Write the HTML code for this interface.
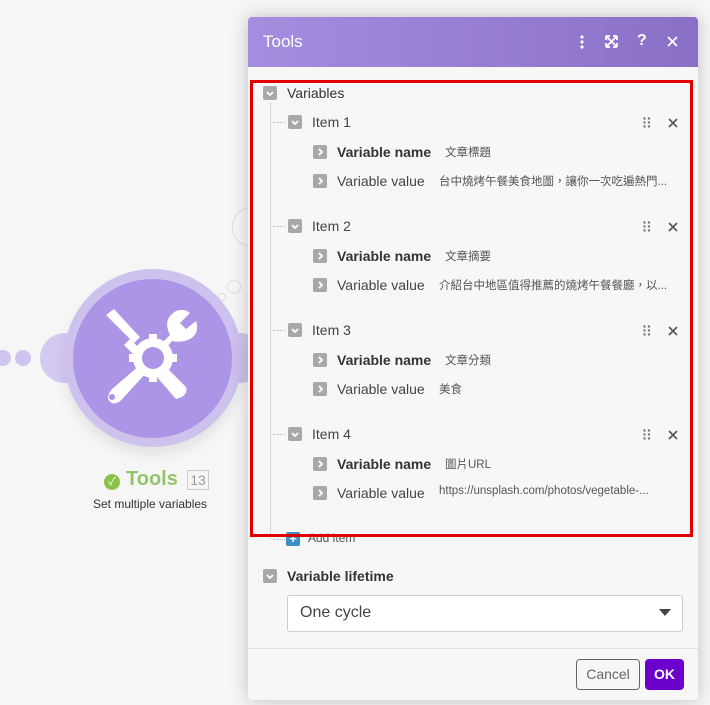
<!DOCTYPE html>
<html><head><meta charset="utf-8"><style>
*{margin:0;padding:0;box-sizing:border-box}
body{width:710px;height:705px;overflow:hidden;background:#f6f6f6;font-family:"Liberation Sans","Noto Sans CJK TC",sans-serif;position:relative;color:#333}
.a{position:absolute}
.panel{left:248px;top:17px;width:450px;height:683px;background:#f7f7f7;border-radius:4px;box-shadow:0 0 18px rgba(0,0,0,.22);overflow:hidden}
.hdr{left:0;top:0;width:450px;height:50px;background:linear-gradient(90deg,#a48ee0,#8a6fc6);color:#fff;font-size:17px;padding:15px 0 0 15px}
.cb{width:14px;height:14px;background:#a8a8a8;border-radius:2px}
.cb svg{display:block}
.t{font-size:14px;white-space:nowrap}
.v{font-size:11.5px;color:#555;white-space:nowrap}
</style></head><body>
<div class="a" style="left:-5px;top:350px;width:16px;height:16px;border-radius:50%;background:#cfc4ee"></div>
<div class="a" style="left:15px;top:350px;width:16px;height:16px;border-radius:50%;background:#cfc4ee"></div>
<div class="a" style="left:40px;top:333px;width:50px;height:50px;border-radius:50%;background:#d4c9f0"></div>
<div class="a" style="left:215px;top:333px;width:50px;height:50px;border-radius:50%;background:#d4c9f0"></div>
<div class="a" style="left:232px;top:207px;width:40px;height:40px;border-radius:50%;border:1px solid #ddd;background:#f7f7f7"></div>
<div class="a" style="left:227px;top:280px;width:14px;height:14px;border-radius:50%;border:1px solid #ddd"></div>
<div class="a" style="left:218px;top:293px;width:8px;height:8px;border-radius:50%;border:1px solid #ddd"></div>
<div class="a" style="left:64px;top:269px;width:178px;height:178px;border-radius:50%;background:#cdc1ee;box-shadow:0 8px 12px rgba(0,0,0,.08)"></div>
<div class="a" style="left:73px;top:279px;width:159px;height:159px;border-radius:50%;background:#ac95e6"></div>
<svg class="a" style="left:100px;top:305px" width="105" height="105" viewBox="0 0 105 105" fill="#fff">
<path d="M6 10 L14 4 L36 28 L40 32 L34 38 L30 34 Z"/>
<path d="M30 34 L44 48 L38 54 L24 40Z"/>
<path d="M58 54 L86 82 Q88 88 82 92 L76 94 L50 64 Z"/>
<path d="M62 38 L70 30 Q62 14 76 6 Q84 3 90 8 L80 18 L86 24 L96 16 Q100 28 90 34 Q82 38 72 36 L64 46Z"/>
<path d="M40 60 L12 84 Q4 94 12 98 Q18 100 24 92 L48 66Z"/><circle cx="12" cy="92" r="3" fill="#ac95e6"/>
<circle cx="53" cy="53" r="20"/><circle cx="53" cy="53" r="11" fill="#ac95e6"/>
<g><rect x="49" y="29" width="8" height="6"/><rect x="49" y="71" width="8" height="6"/><rect x="29" y="49" width="6" height="8"/><rect x="71" y="49" width="6" height="8"/></g>
</svg>
<div class="a" style="left:104px;top:474px;width:16px;height:16px;border-radius:50%;background:#8bc34a;color:#fff;font-size:11px;text-align:center;line-height:16px">✓</div>
<div class="a" style="left:126px;top:468px;font-size:20px;font-weight:bold;color:#94c46a">Tools</div>
<div class="a" style="left:187px;top:470px;width:22px;height:20px;border:1px solid #ccc;color:#999;font-size:14px;text-align:center;line-height:18px">13</div>
<div class="a" style="left:93px;top:497px;font-size:12px;color:#333">Set multiple variables</div>

<div class="a panel">
<div class="a hdr">Tools</div>
<svg class="a" style="left:331px;top:18px" width="6" height="14" fill="#fff"><circle cx="3" cy="2" r="1.6"/><circle cx="3" cy="7" r="1.6"/><circle cx="3" cy="12" r="1.6"/></svg>
<svg class="a" style="left:357px;top:18px" width="13" height="13" stroke="#fff" stroke-width="1.8" fill="none"><path d="M1 1l11 11M12 1L1 12M1 1h4M1 1v4M12 1h-4M12 1v4M1 12h4M1 12v-4M12 12h-4M12 12v-4"/></svg>
<div class="a" style="left:389px;top:15px;color:#fff;font-size:16px;font-weight:bold">?</div>
<svg class="a" style="left:419px;top:19px" width="11" height="11" stroke="#fff" stroke-width="1.8"><path d="M1 1l9 9M10 1l-9 9"/></svg>

<div class="a" style="left:22px;top:86px;height:436px;border-left:1px dotted #bbb"></div>
<div class="a cb" style="left:15px;top:69px"><svg width="14" height="14"><path d="M4 6l3 3 3-3" stroke="#fff" stroke-width="1.8" fill="none"/></svg></div>
<div class="a t" style="left:39px;top:68px">Variables</div>
</div>
<div id="items"></div>
<script>
var d=[["文章標題","台中燒烤午餐美食地圖，讓你一次吃遍熱門..."],["文章摘要","介紹台中地區值得推薦的燒烤午餐餐廳，以..."],["文章分類","美食"],["圖片URL","https://unsplash.com/photos/vegetable-..."]];
var h="";
for(var i=0;i<4;i++){var y=122+i*104;
h+='<div class="a" style="left:273px;top:'+(y)+'px;width:12px;border-top:1px dotted #bbb"></div>';
h+='<div class="a cb" style="left:288px;top:'+(y-7)+'px"><svg width="14" height="14"><path d="M4 6l3 3 3-3" stroke="#fff" stroke-width="1.8" fill="none"/></svg></div>';
h+='<div class="a t" style="left:312px;top:'+(y-8)+'px;color:#444">Item '+(i+1)+'</div>';
h+='<svg class="a" style="left:643px;top:'+(y-5)+'px" width="8" height="11" fill="#777"><circle cx="1.5" cy="1.5" r="1.2"/><circle cx="6" cy="1.5" r="1.2"/><circle cx="1.5" cy="5.5" r="1.2"/><circle cx="6" cy="5.5" r="1.2"/><circle cx="1.5" cy="9.5" r="1.2"/><circle cx="6" cy="9.5" r="1.2"/></svg>';
h+='<svg class="a" style="left:668px;top:'+(y-4)+'px" width="10" height="10" stroke="#555" stroke-width="1.6"><path d="M1 1l8 8M9 1l-8 8"/></svg>';
h+='<div class="a cb" style="left:313px;top:'+(y+23)+'px"><svg width="14" height="14"><path d="M6 4l3 3-3 3" stroke="#fff" stroke-width="1.8" fill="none"/></svg></div>';
h+='<div class="a t" style="left:337px;top:'+(y+22)+'px;font-weight:bold">Variable name</div>';
h+='<div class="a v" style="left:445px;top:'+(y+22)+'px">'+d[i][0]+'</div>';
h+='<div class="a cb" style="left:313px;top:'+(y+52)+'px"><svg width="14" height="14"><path d="M6 4l3 3-3 3" stroke="#fff" stroke-width="1.8" fill="none"/></svg></div>';
h+='<div class="a t" style="left:337px;top:'+(y+51)+'px;color:#444">Variable value</div>';
h+='<div class="a v" style="left:439px;top:'+(y+51)+'px">'+d[i][1]+'</div>';}
document.getElementById("items").innerHTML=h;
</script>
<div class="a" style="left:273px;top:539px;width:12px;border-top:1px dotted #bbb"></div>
<div class="a" style="left:286px;top:532px;width:14px;height:14px;background:#3d8fc9;border-radius:2px;color:#fff;font-size:13px;line-height:14px;text-align:center;font-weight:bold">+</div>
<div class="a" style="left:308px;top:531px;font-size:12px;color:#555">Add item</div>
<div class="a" style="left:250px;top:80px;width:443px;height:457px;border:3px solid #e00000"></div>

<div class="a cb" style="left:263px;top:569px"><svg width="14" height="14"><path d="M4 6l3 3 3-3" stroke="#fff" stroke-width="1.8" fill="none"/></svg></div>
<div class="a t" style="left:287px;top:568px;font-weight:bold">Variable lifetime</div>
<div class="a" style="left:287px;top:595px;width:396px;height:37px;background:#fff;border:1px solid #ccc;border-radius:3px"></div>
<div class="a" style="left:300px;top:604px;font-size:16px;color:#444">One cycle</div>
<div class="a" style="left:659px;top:609px;border-left:6px solid transparent;border-right:6px solid transparent;border-top:7px solid #444"></div>
<div class="a" style="left:248px;top:648px;width:450px;border-top:1px solid #e2e2e2"></div>
<div class="a" style="left:576px;top:659px;width:64px;height:31px;border:1px solid #666;border-radius:4px;color:#666;font-size:14px;text-align:center;line-height:29px;background:#f7f7f7">Cancel</div>
<div class="a" style="left:645px;top:659px;width:39px;height:31px;background:#6b00cc;border-radius:4px;color:#fff;font-size:14px;font-weight:bold;text-align:center;line-height:31px">OK</div>
</body></html>
